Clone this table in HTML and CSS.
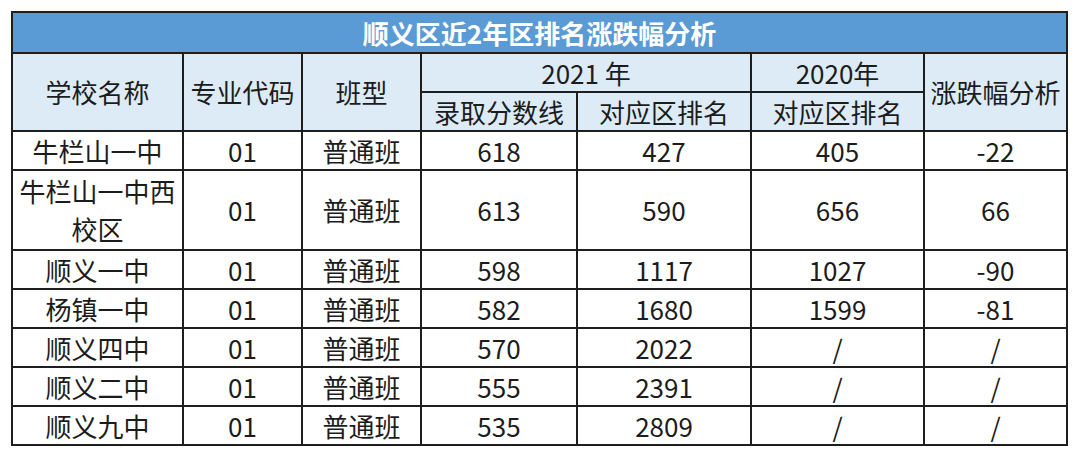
FILE: index.html
```html
<!DOCTYPE html>
<html lang="zh-CN">
<head>
<meta charset="utf-8">
<title>顺义区近2年区排名涨跌幅分析</title>
<link rel="stylesheet" href="styles.css">
</head>
<body>
<div class="sheet">
  <div class="cell title">顺义区近2年区排名涨跌幅分析</div>

  <div class="cell head span-r2">学校名称</div>
  <div class="cell head span-r2">专业代码</div>
  <div class="cell head span-r2">班型</div>
  <div class="cell head span-c2">2021 年</div>
  <div class="cell head">2020年</div>
  <div class="cell head span-r2">涨跌幅分析</div>
  <div class="cell head">录取分数线</div>
  <div class="cell head">对应区排名</div>
  <div class="cell head">对应区排名</div>

  <div class="cell">牛栏山一中</div><div class="cell">01</div><div class="cell">普通班</div><div class="cell">618</div><div class="cell">427</div><div class="cell">405</div><div class="cell">-22</div>
  <div class="cell">牛栏山一中西<br>校区</div><div class="cell">01</div><div class="cell">普通班</div><div class="cell">613</div><div class="cell">590</div><div class="cell">656</div><div class="cell">66</div>
  <div class="cell">顺义一中</div><div class="cell">01</div><div class="cell">普通班</div><div class="cell">598</div><div class="cell">1117</div><div class="cell">1027</div><div class="cell">-90</div>
  <div class="cell">杨镇一中</div><div class="cell">01</div><div class="cell">普通班</div><div class="cell">582</div><div class="cell">1680</div><div class="cell">1599</div><div class="cell">-81</div>
  <div class="cell">顺义四中</div><div class="cell">01</div><div class="cell">普通班</div><div class="cell">570</div><div class="cell">2022</div><div class="cell">/</div><div class="cell">/</div>
  <div class="cell">顺义二中</div><div class="cell">01</div><div class="cell">普通班</div><div class="cell">555</div><div class="cell">2391</div><div class="cell">/</div><div class="cell">/</div>
  <div class="cell">顺义九中</div><div class="cell">01</div><div class="cell">普通班</div><div class="cell">535</div><div class="cell">2809</div><div class="cell">/</div><div class="cell">/</div>
</div>
</body>
</html>
```
FILE: styles.css
```css
html, body {
  margin: 0;
  padding: 0;
  background: #ffffff;
}

body {
  font-family: "Noto Sans CJK SC", "Noto Sans", sans-serif;
  color: #1c1c1c;
}

.sheet {
  margin: 11px 0 0 11px;
  width: 1057px;
  box-sizing: border-box;
  display: grid;
  grid-template-columns: 169px 117px 117px 154px 172px 171px 141px;
  grid-template-rows: 39px 37px 37px 37px 78px 37px 37px 37px 37px 37px;
  gap: 2px;
  padding: 2px;
  background: #1e1e1e;
}

.cell {
  background: #ffffff;
  display: flex;
  align-items: center;
  justify-content: center;
  text-align: center;
  font-size: 26px;
  line-height: 38px;
  white-space: nowrap;
}

.title {
  grid-column: 1 / -1;
  background: #5b9bd5;
  color: #ffffff;
  font-weight: bold;
  font-size: 26px;
}

.head {
  background: #ddebf7;
}

.span-r2 {
  grid-row: span 2;
}

.span-c2 {
  grid-column: span 2;
}
```
